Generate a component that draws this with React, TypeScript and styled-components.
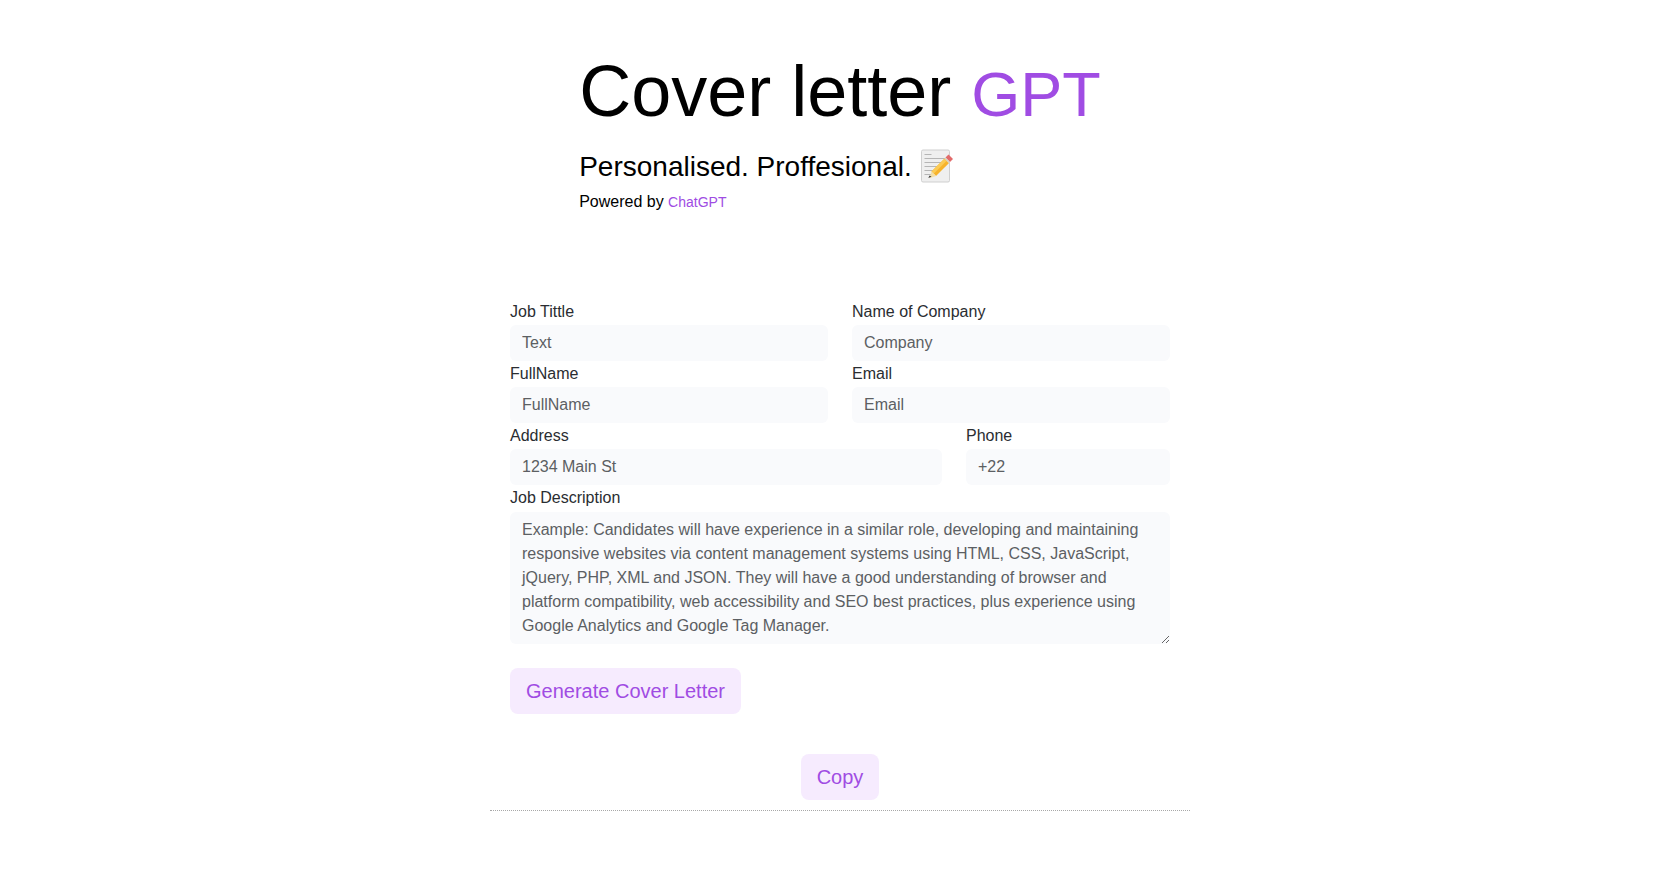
import React from 'react'
import styled, { createGlobalStyle } from 'styled-components'

const GlobalStyle = createGlobalStyle`
  * {
    box-sizing: border-box;
  }
  html,
  body {
    margin: 0;
    padding: 0;
    background: #fff;
    font-family: "Liberation Sans", Arial, sans-serif;
    color: #000;
  }
`

const Page = styled.main`
  display: flex;
  flex-direction: column;
  align-items: center;
  min-height: 876px;
`

const Header = styled.header`
  width: fit-content;
  padding-top: 46px;
`

const Title = styled.h1`
  margin: 0;
  font-size: 72px;
  line-height: 90px;
  font-weight: 400;
  white-space: nowrap;
`

const Accent = styled.span`
  color: #a04ce3;
  font-size: 63px;
  line-height: 1;
`

const Subtitle = styled.h2`
  margin: 13px 0 0;
  font-size: 28px;
  line-height: 36px;
  font-weight: 400;
`

const Memo = styled.svg`
  display: inline-block;
  width: 34px;
  height: 34px;
  margin: -8px 0 -8px 1px;
  vertical-align: 1px;
`

const Powered = styled.p`
  margin: 5px 0 0;
  font-size: 16px;
  line-height: 24px;
`

const PoweredLink = styled.a`
  color: #a04ce3;
  font-size: 14px;
  text-decoration: none;
`

const Form = styled.form`
  width: 660px;
  margin-top: 86px;
  display: grid;
  grid-template-columns: repeat(6, 1fr);
  column-gap: 24px;
  row-gap: 1px;
`

const Field = styled.div<{ $span: number }>`
  grid-column: span ${(p) => p.$span};
`

const Label = styled.label`
  display: block;
  margin-bottom: 1px;
  font-size: 16px;
  line-height: 24px;
  color: #2a2d31;
`

const Input = styled.input`
  display: block;
  width: 100%;
  height: 36px;
  padding: 0 12px;
  border: 0;
  border-radius: 6px;
  background: #f9fafc;
  font-family: inherit;
  font-size: 16px;
  color: #212529;
  outline: none;

  &::placeholder {
    color: #5c5f63;
    opacity: 1;
  }
`

const TextArea = styled.textarea`
  display: block;
  width: 100%;
  height: 132px;
  margin-top: 2px;
  padding: 6px 12px;
  border: 0;
  border-radius: 6px;
  background: #f9fafc;
  font-family: inherit;
  font-size: 16px;
  line-height: 24px;
  color: #212529;
  outline: none;

  &::placeholder {
    color: #5c5f63;
    opacity: 1;
  }
`

const Button = styled.button`
  height: 46px;
  padding: 0 16px;
  border: 0;
  border-radius: 8px;
  background: #f6ebfe;
  color: #a04ce3;
  font-family: inherit;
  font-size: 20px;
  cursor: pointer;
`

const Actions = styled.div`
  grid-column: span 6;
  margin-top: 23px;
`

const Result = styled.section`
  width: 700px;
  margin-top: 40px;
  display: flex;
  flex-direction: column;
  align-items: center;
`

const Divider = styled.hr`
  width: 100%;
  margin: 10px 0 0;
  border: 0;
  border-top: 1px dotted #a8a8a8;
`

const description =
  'Example: Candidates will have experience in a similar role, developing and maintaining responsive websites via content management systems using HTML, CSS, JavaScript, jQuery, PHP, XML and JSON. They will have a good understanding of browser and platform compatibility, web accessibility and SEO best practices, plus experience using Google Analytics and Google Tag Manager.'

const MemoIcon = () => (
  <Memo viewBox="0 0 34 34" role="img" aria-label="memo">
    <rect x="0.5" y="1" width="28" height="32" rx="1.5" fill="#efefef" stroke="#cfcfcf" />
    <path
      d="M3.5 5.5h7M3.5 9.5h21M3.5 13.5h21M3.5 17.5h15M3.5 21.5h11M3.5 25.5h7"
      stroke="#b5b5b5"
      strokeWidth="1"
      fill="none"
    />
    <path d="M27.5 5.5l4.5 4.5-3 3-4.5-4.5z" fill="#e26a6a" />
    <path d="M24.5 8.5l4.5 4.5-1.2 1.2-4.5-4.5z" fill="#d9d2c0" />
    <path d="M23.3 9.7l4.5 4.5-12.8 12.8-4.5-4.5z" fill="#f7b32b" />
    <path d="M23.3 9.7l2.2 2.2-12.8 12.8-2.2-2.2z" fill="#fbcb55" />
    <path d="M10.5 22.5l4.5 4.5-6.5 2.2z" fill="#f3dfa8" />
    <path d="M8.6 26.4l1.9 1.3-3.2 1.4z" fill="#3c3c3c" />
  </Memo>
)

const App: React.FunctionComponent = () => (
  <>
    <GlobalStyle />
    <Page>
      <Header>
        <Title>
          Cover letter <Accent>GPT</Accent>
        </Title>
        <Subtitle>
          Personalised. Proffesional. <MemoIcon />
        </Subtitle>
        <Powered>
          Powered by <PoweredLink href="#">ChatGPT</PoweredLink>
        </Powered>
      </Header>
      <Form>
        <Field $span={3}>
          <Label>Job Tittle</Label>
          <Input placeholder="Text" />
        </Field>
        <Field $span={3}>
          <Label>Name of Company</Label>
          <Input placeholder="Company" />
        </Field>
        <Field $span={3}>
          <Label>FullName</Label>
          <Input placeholder="FullName" />
        </Field>
        <Field $span={3}>
          <Label>Email</Label>
          <Input placeholder="Email" />
        </Field>
        <Field $span={4}>
          <Label>Address</Label>
          <Input placeholder="1234 Main St" />
        </Field>
        <Field $span={2}>
          <Label>Phone</Label>
          <Input placeholder="+22" />
        </Field>
        <Field $span={6}>
          <Label>Job Description</Label>
          <TextArea placeholder={description} />
        </Field>
        <Actions>
          <Button type="button">Generate Cover Letter</Button>
        </Actions>
      </Form>
      <Result>
        <Button type="button">Copy</Button>
        <Divider />
      </Result>
    </Page>
  </>
)

export default App
